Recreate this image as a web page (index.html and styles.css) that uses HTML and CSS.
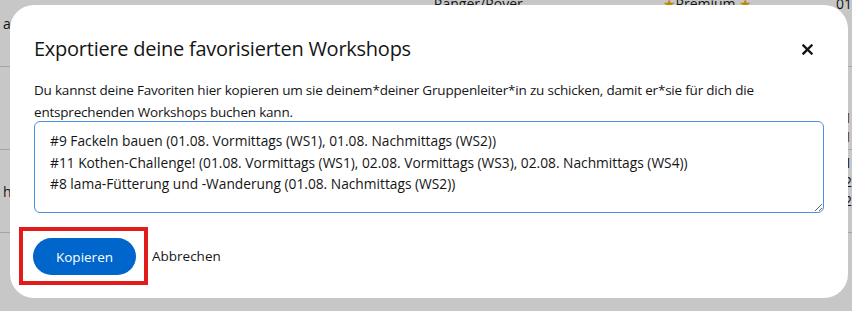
FILE: index.html
```html
<!DOCTYPE html>
<html lang="de">
<head>
    <meta charset="UTF-8">
    <meta name="viewport" content="width=device-width, initial-scale=1.0">
    <title>Workshops</title>
    <link rel="stylesheet" href="styles.css">
</head>
<body>
    <div class="page">
        <div class="row row-head">
            <span class="cell c1 first">a</span>
            <span class="cell c2 top">Ranger/Rover</span>
            <span class="cell c3 top"><span class="star">&#9733;</span>Premium <span class="star">&#9733;</span></span>
            <span class="cell c4 top">01</span>
        </div>
        <div class="row">
            <span class="cell c1"></span>
            <span class="cell c2"></span>
            <span class="cell c3"></span>
            <span class="cell c4 orange low">1<br>1</span>
        </div>
        <div class="row">
            <span class="cell c1">h</span>
            <span class="cell c2"></span>
            <span class="cell c3"></span>
            <span class="cell c4 high">1<br>2<br>2</span>
        </div>
    </div>

    <div class="backdrop">
        <div class="modal" role="dialog">
            <div class="modal-header">
                <h1 class="modal-title">Exportiere deine favorisierten Workshops</h1>
                <button class="close" aria-label="Schließen">
                    <svg width="11" height="11" viewBox="0 0 11 11"><path d="M1.5 1.5 L9.5 9.5 M9.5 1.5 L1.5 9.5" stroke="#151515" stroke-width="2.4" stroke-linecap="square"/></svg>
                </button>
            </div>
            <div class="modal-body">
                <p>Du kannst deine Favoriten hier kopieren um sie deinem*deiner Gruppenleiter*in zu schicken, damit er*sie für dich die entsprechenden Workshops buchen kann.</p>
                <textarea rows="4" readonly>#9 Fackeln bauen (01.08. Vormittags (WS1), 01.08. Nachmittags (WS2))
#11 Kothen-Challenge! (01.08. Vormittags (WS1), 02.08. Vormittags (WS3), 02.08. Nachmittags (WS4))
#8 lama-Fütterung und -Wanderung (01.08. Nachmittags (WS2))</textarea>
            </div>
            <div class="modal-footer">
                <div class="highlight">
                    <button class="btn-primary">Kopieren</button>
                </div>
                <button class="btn-link">Abbrechen</button>
            </div>
        </div>
    </div>
</body>
</html>
```

FILE: styles.css
```css
body {
    margin: 0;
    font-family: "Open Sans", "Noto Sans", sans-serif;
    color: #151515;
    background: #fff;
}
.page {
    font-size: 14px;
}
.row {
    display: flex;
    height: 82px;
    border-bottom: 1px solid #d2d2d2;
}
.row-head {
    height: 66px;
}
.cell {
    display: block;
    line-height: 19px;
}
.c1 {
    width: 430px;
    padding-left: 3px;
    align-self: center;
}
.c1.first {
    align-self: flex-start;
    margin-top: 14px;
}
.c2 {
    width: 232px;
    padding-left: 7px;
}
.c3 {
    width: 176px;
}
.top {
    margin-top: -6px;
}
.low {
    margin-top: 41px;
}
.high {
    margin-top: 3px;
}
.orange {
    color: #8a4a00;
}
.star {
    color: #f0ab00;
}
.backdrop {
    position: fixed;
    inset: 0;
    background: rgba(21, 21, 21, 0.24);
    display: flex;
    align-items: flex-start;
    padding: 5px 0 0 10px;
}
.modal {
    width: 838px;
    height: 293px;
    box-sizing: border-box;
    background: #fff;
    border-radius: 24px;
    padding: 0 24px;
    display: flex;
    flex-direction: column;
}
.modal-header {
    display: flex;
    justify-content: space-between;
    align-items: center;
    padding-top: 30px;
}
.modal-title {
    margin: 0;
    font-size: 20px;
    font-weight: 500;
    line-height: 28px;
    letter-spacing: -0.25px;
}
.close {
    border: 0;
    background: none;
    padding: 0;
    margin-right: 11px;
    width: 11px;
    height: 11px;
    display: flex;
}
.modal-body {
    padding-top: 16px;
    font-size: 13.5px;
    line-height: 22px;
}
.modal-body p {
    margin: 0;
    letter-spacing: -0.2px;
}
.modal-body textarea {
    display: block;
    width: 100%;
    box-sizing: border-box;
    height: 92px;
    margin-top: -2px;
    padding: 8px 15px 7px;
    border: 1px solid #4d90e0;
    border-radius: 6px;
    font-family: inherit;
    font-size: 13.75px;
    line-height: 21.5px;
    color: #151515;
    resize: vertical;
    outline: none;
}
.modal-footer {
    display: flex;
    align-items: center;
    gap: 4px;
    margin-top: 14px;
    margin-left: -15px;
}
.highlight {
    border: 4px solid #e21b1b;
    padding: 7px 8px 6px 10px;
}
.btn-primary {
    background: #0066cc;
    color: #fff;
    border: 0;
    border-radius: 20px;
    width: 103px;
    height: 37px;
    font-family: inherit;
    font-size: 13.5px;
}
.btn-link {
    background: none;
    border: 0;
    padding: 0;
    font-family: inherit;
    font-size: 13.5px;
    color: #151515;
}
```
